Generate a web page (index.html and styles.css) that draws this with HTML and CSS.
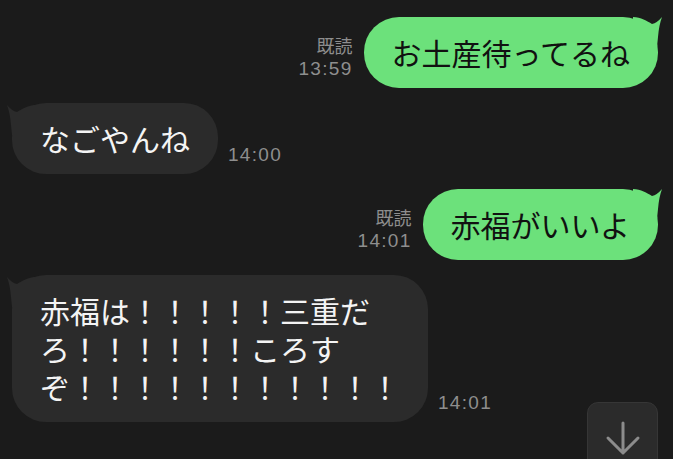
FILE: index.html
```html
<!DOCTYPE html><html>
<head>
  <meta name="viewport" content="width=device-width, initial-scale=1.0">
  <title>トーク</title>
  <link rel="stylesheet" href="styles.css">
</head><body>

<div class="chat">
  <div class="row sent">
    <div class="meta"><span class="read">既読</span><span class="time">13:59</span></div>
    <div class="bubble mine">お土産待ってるね<svg class="tail" viewBox="0 0 30 30"><path d="M0 0 C8 0 14 4 19 7 Q24 6 29 0 Q26 8 25 20 L24 30 L0 30 Z"/></svg></div>
  </div>

  <div class="row received">
    <div class="bubble theirs">なごやんね<svg class="tail" viewBox="0 0 30 30"><path d="M30 0 C22 0 16 4 11 7 Q6 6 1 0 Q4 8 5 20 L6 30 L30 30 Z"/></svg></div>
    <div class="meta"><span class="time">14:00</span></div>
  </div>

  <div class="row sent">
    <div class="meta"><span class="read">既読</span><span class="time">14:01</span></div>
    <div class="bubble mine">赤福がいいよ<svg class="tail" viewBox="0 0 30 30"><path d="M0 0 C8 0 14 4 19 7 Q24 6 29 0 Q26 8 25 20 L24 30 L0 30 Z"/></svg></div>
  </div>

  <div class="row received">
    <div class="bubble theirs multi"><span class="line">赤福は！！！！！三重だ</span><span class="line">ろ！！！！！！ころす</span><span class="line">ぞ！！！！！！！！！！！</span><svg class="tail" viewBox="0 0 30 30"><path d="M30 0 C22 0 16 4 11 7 Q6 6 1 0 Q4 8 5 20 L6 30 L30 30 Z"/></svg></div>
    <div class="meta"><span class="time">14:01</span></div>
  </div>
</div>

<button class="scroll-down" type="button" aria-label="一番下へ">
  <svg viewBox="0 0 71 70"><path d="M35 20 V50 M20 35 L35 50 L50 35"/></svg>
</button>

</body></html>
```

FILE: styles.css
```css
* { box-sizing: border-box; }
html, body { height: 100%; }
body {
  margin: 0;
  overflow: hidden;
  background: #1b1b1b;
  font-family: "Noto Sans CJK JP", "Noto Sans", sans-serif;
}
.chat { display: flex; flex-direction: column; gap: 15px; padding: 17px 15px 0 12px; }
.row { display: flex; align-items: flex-end; gap: 10px; }
.sent { justify-content: flex-end; gap: 11px; }

.bubble {
  position: relative;
  padding: 16px 28px 17px;
  border-radius: 35px;
  font-size: 30px;
  line-height: 38px;
  white-space: nowrap;
}
.bubble.theirs { border-radius: 34px; }
.multi { display: flex; flex-direction: column; }
.line { display: block; height: 38px; }
.mine { background: #6ce17b; color: #111; }
.theirs { background: #2b2b2b; color: #f4f4f4; }

/* horn on the upper corner of each bubble */
.tail { position: absolute; top: 0; width: 30px; height: 30px; }
.mine .tail { right: -5px; fill: #6ce17b; }
.theirs .tail { left: -6px; top: 2px; fill: #2b2b2b; }

.meta { display: flex; flex-direction: column; align-items: flex-end; margin-bottom: 7px; color: #8e8e8e; }
.read { font-size: 18px; line-height: 24px; }
.time { font-family: "Liberation Sans", Arial, sans-serif; font-size: 19px; line-height: 24px; letter-spacing: 1.3px; }

.scroll-down {
  position: fixed;
  right: 15px;
  top: 402px;
  width: 71px;
  height: 70px;
  padding: 0;
  border: 1px solid #363636;
  border-radius: 11px;
  background: #2b2b2b;
}
.scroll-down svg { display: block; width: 71px; height: 70px; fill: none; stroke: #8c8c8c; stroke-width: 3; stroke-linecap: round; stroke-linejoin: round; }
```
